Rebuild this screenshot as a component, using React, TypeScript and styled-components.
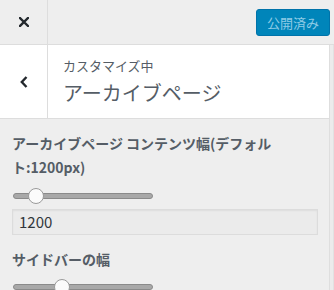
import React from "react";
import styled, { createGlobalStyle } from "styled-components";

const GlobalStyle = createGlobalStyle`
  html, body {
    margin: 0;
    padding: 0;
    background: #eeeeee;
    font-family: "Noto Sans CJK JP", "Noto Sans", sans-serif;
    color: #555d66;
  }
`;

const Wrapper = styled.div`
  width: 334px;
  height: 290px;
  overflow: hidden;
  background: #eeeeee;
`;

const Header = styled.div`
  display: flex;
  align-items: center;
  height: 44px;
  border-bottom: 1px solid #dddddd;
  background: #eeeeee;
`;

const IconCell = styled.div<{ $height: number }>`
  width: 47px;
  height: ${(p) => p.$height}px;
  display: flex;
  align-items: center;
  justify-content: center;
  border-right: 1px solid #dddddd;
  color: #23282d;
`;

const Spacer = styled.div`
  flex: 1;
`;

const PublishButton = styled.div`
  width: 74px;
  height: 27px;
  margin-right: 4px;
  border-radius: 3px;
  background: #0085ba;
  color: #8ecbe6;
  font-size: 13px;
  display: flex;
  align-items: center;
  justify-content: center;
  box-sizing: border-box;
  border: 1px solid #0073aa;
`;

const Body = styled.div`
  display: flex;
`;

const Panel = styled.div`
  width: 329px;
  flex-shrink: 0;
`;

const ScrollStrip = styled.div`
  flex: 1;
  height: 245px;
  border-left: 1px solid #dedede;
  border-right: 1px solid #e2e2e2;
  background: #ececec;
`;

const TitleSection = styled.div`
  display: flex;
  background: #ffffff;
  border-bottom: 1px solid #dddddd;
`;

const TitleText = styled.div`
  padding: 11px 0 0 15px;
  display: flex;
  flex-direction: column;
`;

const SubTitle = styled.span`
  font-size: 13px;
  line-height: 20px;
  color: #555d66;
`;

const MainTitle = styled.span`
  font-size: 20px;
  line-height: 30px;
  color: #555d66;
  margin-top: 2px;
`;

const Controls = styled.div`
  padding: 12px 11px 0 12px;
`;

const ControlLabel = styled.div`
  font-size: 14px;
  font-weight: 700;
  line-height: 24px;
  color: #555d66;
`;

const Slider = styled.div<{ $top: number }>`
  position: relative;
  width: 138px;
  height: 4px;
  margin: ${(p) => p.$top}px 0 0 1px;
  border: 1px solid #8a8a8a;
  border-radius: 3px;
  background: #a8a8a8;
`;

const Thumb = styled.div`
  position: absolute;
  top: -6px;
  width: 14px;
  height: 14px;
  margin-left: -8px;
  border: 1px solid #9a9a9a;
  border-radius: 50%;
  background: #fbfbfb;
`;

const NumberInput = styled.div`
  margin-top: 10px;
  height: 26px;
  width: 306px;
  box-sizing: border-box;
  border: 1px solid #dcdcdc;
  background: #ebebeb;
  box-shadow: inset 0 1px 2px rgba(0, 0, 0, 0.06);
  font-size: 15px;
  line-height: 24px;
  padding-left: 6px;
  color: #32373c;
`;

const SecondLabel = styled(ControlLabel)`
  margin-top: 12px;
`;

const CloseIcon = () => (
  <svg width="10" height="10" viewBox="0 0 10 10">
    <path d="M1 1 L9 9 M9 1 L1 9" stroke="#23282d" strokeWidth="2.4" strokeLinecap="square" />
  </svg>
);

const BackIcon = () => (
  <svg width="8" height="12" viewBox="0 0 8 12">
    <path d="M6.5 1 L1.8 6 L6.5 11" fill="none" stroke="#23282d" strokeWidth="2.4" />
  </svg>
);

const RangeControl = ({ top, pos }: { top: number; pos: number }) => (
  <Slider $top={top}>
    <Thumb style={{ left: `${pos}px` }} />
  </Slider>
);

export default function App() {
  return (
    <Wrapper>
      <GlobalStyle />
      <Header>
        <IconCell $height={44}>
          <CloseIcon />
        </IconCell>
        <Spacer />
        <PublishButton>公開済み</PublishButton>
      </Header>
      <Body>
        <Panel>
          <TitleSection>
            <IconCell $height={73}>
              <BackIcon />
            </IconCell>
            <TitleText>
              <SubTitle>カスタマイズ中</SubTitle>
              <MainTitle>アーカイブページ</MainTitle>
            </TitleText>
          </TitleSection>
          <Controls>
            <ControlLabel>
              アーカイブページ コンテンツ幅(デフォル
              <br />
              ト:1200px)
            </ControlLabel>
            <RangeControl top={14} pos={22} />
            <NumberInput>1200</NumberInput>
            <SecondLabel>サイドバーの幅</SecondLabel>
            <RangeControl top={13} pos={48} />
          </Controls>
        </Panel>
        <ScrollStrip />
      </Body>
    </Wrapper>
  );
}
